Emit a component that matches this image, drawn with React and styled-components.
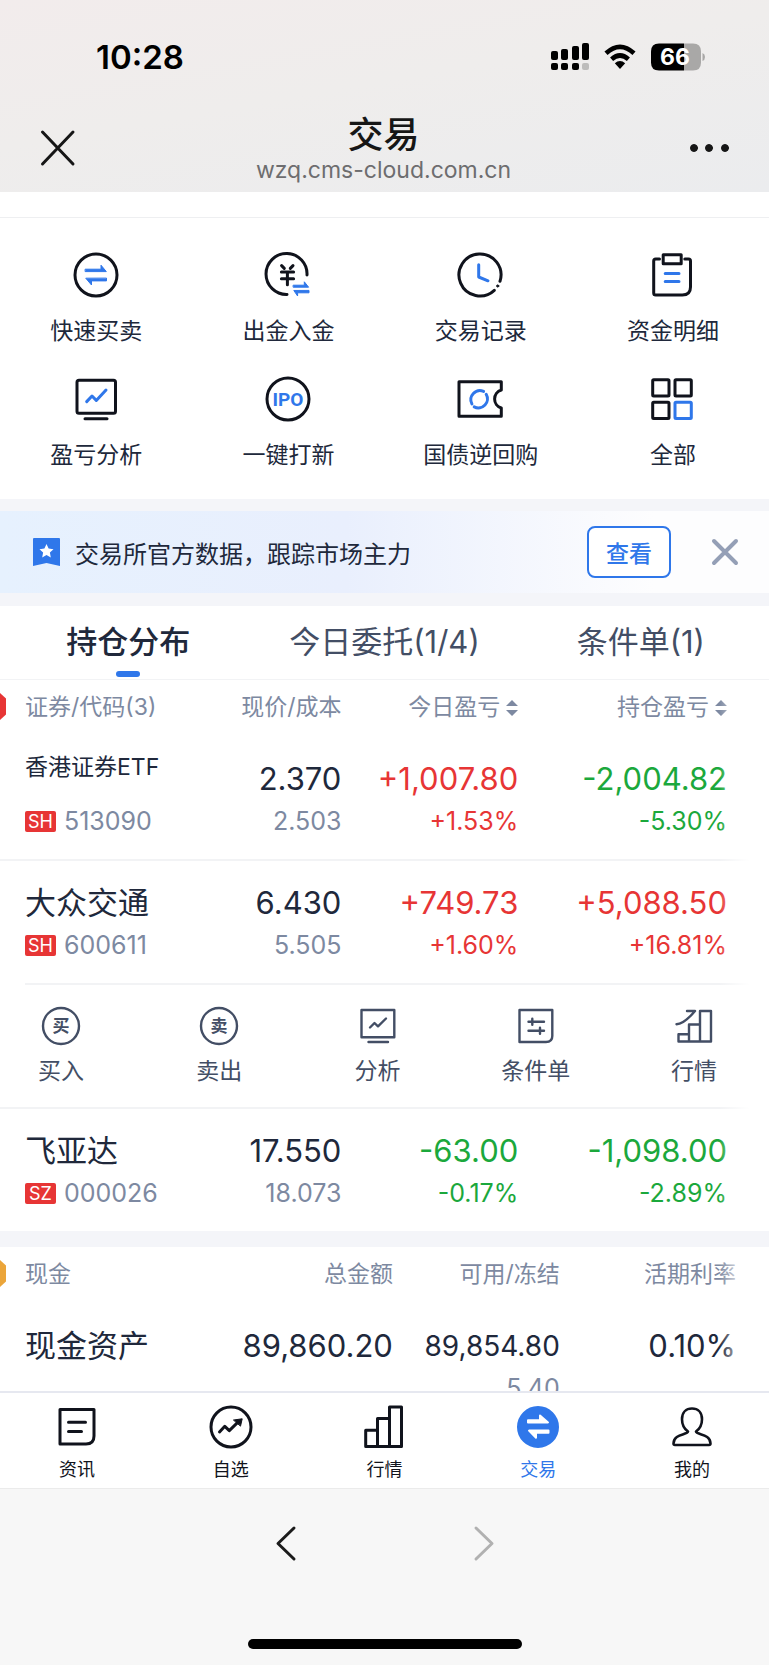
import React from "react";
import styled, { createGlobalStyle, ThemeProvider } from "styled-components";

const theme = {
  primary: "#2f77ea",
  ink: "#10131c",
  text: "#20283b",
  text_secondary: "#434e65",
  text_muted: "#7d89a1",
  up: "#e73535",
  down: "#1ba83c",
  cash: "#eba53a",
  line: "#f2f3f5",
  band: "#f4f5f9",
};

const GlobalStyle = createGlobalStyle`
  * {
    box-sizing: border-box;
  }
  body {
    margin: 0;
    background: #f7f7f7;
    font-family: Inter, "Noto Sans CJK SC", sans-serif;
  }
  button {
    margin: 0;
    padding: 0;
    border: 0;
    background: none;
    color: inherit;
    font: inherit;
  }
  a {
    color: inherit;
    text-decoration: none;
  }
  svg {
    display: block;
    flex: none;
  }
`;

const Page = styled.div`
  height: 100vh;
  display: flex;
  flex-direction: column;
  color: ${({ theme }) => theme.text};
`;

const Header = styled.header`
  background: linear-gradient(170deg, #f2ecec 0%, #efedec 45%, #ebecee 100%);
`;

const StatusBar = styled.div`
  height: 114px;
  padding: 0 64px 0 96px;
  display: flex;
  align-items: center;
  justify-content: space-between;
  color: #000;
`;

const Time = styled.span`
  font-size: 33px;
  font-weight: 600;
`;

const StatusIcons = styled.div`
  display: flex;
  align-items: center;
  gap: 14px;
`;

const NavBar = styled.div`
  height: 78px;
  padding: 0 39px 0 37px;
  display: flex;
  justify-content: space-between;
  color: #161616;
`;

const NavButton = styled.button`
  height: 68px;
`;

const NavTitle = styled.div`
  padding-top: 1px;
  text-align: center;
`;

const Title = styled.h1`
  margin: 0;
  font-size: 36px;
  line-height: 40px;
  font-weight: 500;
`;

const Domain = styled.div`
  font-size: 23px;
  line-height: 30px;
  color: #6d6d6f;
`;

const Content = styled.main`
  flex: 1 1 0;
  min-height: 0;
  overflow: hidden;
  background: #fff;
`;

const Divider = styled.div`
  height: 26px;
  border-bottom: 1px solid #eeeff1;
`;

const Shortcuts = styled.nav`
  padding-top: 33px;
  display: grid;
  grid-template-columns: repeat(4, 1fr);
`;

const Shortcut = styled.a`
  height: 124px;
  display: flex;
  flex-direction: column;
  align-items: center;
  gap: 16px;
  font-size: 23px;
  line-height: 32px;
`;

const Band = styled.div`
  height: ${({ $size }) => $size}px;
  background: ${({ theme }) => theme.band};
`;

const Banner = styled.section`
  height: 82px;
  padding: 0 29px 0 32px;
  display: flex;
  align-items: center;
  background: linear-gradient(90deg, #e6f1fe 0%, #e9effd 45%, #fdfdfe 85%);
`;

const BannerText = styled.p`
  flex: 1;
  margin: 0 0 0 14px;
  font-size: 24px;
`;

const ViewButton = styled.button`
  width: 84px;
  height: 52px;
  margin-right: 39px;
  border: 2px solid ${({ theme }) => theme.primary};
  border-radius: 8px;
  background: #fff;
  color: ${({ theme }) => theme.primary};
  font-size: 23px;
  font-weight: 500;
`;

const Tabs = styled.div`
  height: 74px;
  display: grid;
  grid-template-columns: repeat(3, 1fr);
  border-bottom: 1px solid ${({ theme }) => theme.line};
`;

const Tab = styled.button`
  padding-top: 16px;
  display: flex;
  flex-direction: column;
  align-items: center;
  gap: 9px;
  font-size: 31px;
  line-height: 40px;
  font-weight: ${({ $active }) => ($active ? 500 : 400)};
  color: ${({ $active, theme }) => ($active ? theme.text : theme.text_secondary)};
  &::after {
    content: "";
    width: 24px;
    height: 6px;
    border-radius: 3px;
    background: ${({ $active, theme }) => ($active ? theme.primary : "transparent")};
  }
`;

const Panel = styled.section`
  position: relative;
  &::before {
    content: "";
    position: absolute;
    left: 0;
    top: 13px;
    width: 6px;
    height: 27px;
    background: ${({ $marker }) => $marker};
    clip-path: polygon(0 0, 100% 20%, 100% 80%, 0 100%);
  }
  &::after {
    content: "";
    position: absolute;
    top: 0;
    right: 0;
    bottom: 0;
    width: 50px;
    background: linear-gradient(90deg, rgba(255, 255, 255, 0), #fff 60%);
    pointer-events: none;
  }
`;

const Table = styled.table`
  width: 100%;
  border-collapse: collapse;
  table-layout: fixed;
  th,
  td {
    padding: 0;
    text-align: right;
    vertical-align: top;
  }
  th:first-child,
  td:first-child {
    padding-left: 25px;
    text-align: left;
  }
  th:last-child,
  td:last-child {
    padding-right: ${({ $end }) => $end}px;
  }
`;

const Col = styled.col`
  width: ${({ $share }) => $share};
`;

const HeadCell = styled.th`
  height: 57px;
  font-size: 23px;
  line-height: 55px;
  font-weight: 400;
  color: ${({ theme }) => theme.text_muted};
  white-space: nowrap;
`;

const SortButton = styled.button`
  display: inline-flex;
  align-items: center;
  gap: 6px;
`;

const Row = styled.tr`
  height: 123px;
  border-top: ${({ $line, theme }) => ($line ? `2px solid ${theme.line}` : "0")};
`;

const tones = {
  up: ({ theme }) => theme.up,
  down: ({ theme }) => theme.down,
};

const Value = styled.div`
  padding-top: 20px;
  font-size: ${({ $small }) => ($small ? 28 : 31)}px;
  line-height: 44px;
  color: ${({ $tone, theme }) => (tones[$tone] ? tones[$tone]({ theme }) : theme.text)};
`;

const SubValue = styled.div`
  font-size: 25px;
  line-height: 40px;
  color: ${({ $tone, theme }) => (tones[$tone] ? tones[$tone]({ theme }) : theme.text_muted)};
`;

const Name = styled.div`
  padding-top: ${({ $long }) => ($long ? 8 : 20)}px;
  margin-bottom: ${({ $long }) => ($long ? 12 : 0)}px;
  font-size: ${({ $long }) => ($long ? 23 : 31)}px;
  line-height: 44px;
  white-space: nowrap;
`;

const Code = styled.div`
  display: flex;
  align-items: center;
  gap: 8px;
  font-size: 25px;
  line-height: 40px;
  color: ${({ theme }) => theme.text_muted};
`;

const Market = styled.span`
  width: 31px;
  border-radius: 2px;
  background: ${({ theme }) => theme.up};
  color: #fff;
  font-size: 18px;
  line-height: 21px;
  text-align: center;
`;

const ActionsCell = styled.td`
  height: 125px;
  &&& {
    padding-right: 0;
  }
`;

const Actions = styled.div`
  padding: 21px 39px 0 0;
  display: flex;
  justify-content: space-between;
  border-top: 2px solid ${({ theme }) => theme.line};
`;

const Action = styled.button`
  width: 72px;
  display: flex;
  flex-direction: column;
  align-items: center;
  gap: 9px;
  font-size: 23px;
  line-height: 32px;
  color: ${({ theme }) => theme.text_secondary};
`;

const TabBar = styled.nav`
  height: 97px;
  padding-top: 12px;
  display: grid;
  grid-template-columns: repeat(5, 1fr);
  border-top: 2px solid #e6e8f0;
  background: #fff;
`;

const TabLink = styled.a`
  display: flex;
  flex-direction: column;
  align-items: center;
  gap: 8px;
  font-size: 18px;
  line-height: 26px;
  color: ${({ $active, theme }) => ($active ? theme.primary : theme.ink)};
`;

const BrowserBar = styled.footer`
  height: 177px;
  padding: 34px 0 16px;
  display: flex;
  flex-direction: column;
  align-items: center;
  justify-content: space-between;
  border-top: 1px solid #ebebeb;
`;

const History = styled.div`
  display: flex;
  gap: 158px;
`;

const HomeIndicator = styled.div`
  width: 274px;
  height: 10px;
  border-radius: 5px;
  background: #000;
`;

const Line = styled.svg`
  fill: none;
  stroke: currentColor;
  stroke-width: ${({ $weight }) => $weight};
  stroke-linecap: round;
  stroke-linejoin: round;
  .blue {
    stroke: ${({ theme }) => theme.primary};
  }
  .solid {
    fill: currentColor;
    stroke-width: 1;
  }
  .blueSolid {
    fill: ${({ theme }) => theme.primary};
    stroke: ${({ theme }) => theme.primary};
    stroke-width: 1;
  }
`;

const Glyph = styled.text`
  fill: ${({ $blue, theme }) => ($blue ? theme.primary : "currentColor")};
  stroke: none;
  font-family: ${({ $blue }) => ($blue ? "Roboto, sans-serif" : '"Noto Sans CJK SC", sans-serif')};
  font-size: ${({ $blue }) => ($blue ? 19 : 17)}px;
  font-weight: 700;
  text-anchor: middle;
`;

const BatteryText = styled.text`
  fill: #fff;
  font-size: 23px;
  font-weight: 700;
  text-anchor: middle;
`;

const Icon = ({ size = 48, weight = 3, color, children }) => (
  <Line width={size} height={size} viewBox={`0 0 ${size} ${size}`} $weight={weight} color={color} aria-hidden="true">
    {children}
  </Line>
);

const shortcuts = [
  {
    label: "快速买卖",
    icon: (
      <>
        <circle cx="24" cy="24" r="21" />
        <path className="blueSolid" d="M13.5 18.2H29V14.2L34.3 20.6H13.5Z" />
        <path className="blueSolid" d="M34.5 27.5V29.9H19.5V34L14 27.5Z" />
      </>
    ),
  },
  {
    label: "出金入金",
    icon: (
      <>
        <path d="M43 24A20.5 20.5 0 1 0 23 43.5" />
        <path d="M17.6 14.6L20.3 17.4M29 14.6L26.3 17.4M17.4 20.9H29.6M17.4 27.7H29.6M23.4 20.9V33.8" />
        <path className="blueSolid" d="M29.5 34.2H40.3V30.8L44.6 36.2H29.5Z" />
        <path className="blueSolid" d="M45 39.8V41.8H33.6V45L30 39.8Z" />
      </>
    ),
  },
  {
    label: "交易记录",
    icon: (
      <>
        <path d="M43 30.3A21 21 0 1 0 37.3 39.3" />
        <circle className="solid" cx="40.7" cy="35" r="1.1" />
        <path className="blue" d="M21.7 13.8V26L31 29.8" />
      </>
    ),
  },
  {
    label: "资金明细",
    icon: (
      <>
        <path d="M10.5 8H6.7Q4.7 8 4.7 10V42Q4.7 44 6.7 44H33.3Q41.5 44 41.5 36V10Q41.5 8 39.5 8H35.8" />
        <rect x="14.2" y="3.8" width="18" height="9" />
        <path className="blue" d="M16.2 22.4H30M16.2 30.4H30" />
      </>
    ),
  },
  {
    label: "盈亏分析",
    icon: (
      <>
        <rect x="5" y="5.3" width="38.5" height="33" rx="2" />
        <path d="M13 43.8H35" />
        <path className="blue" d="M14.7 26.6L20 21L24.3 25.4L34 15" />
      </>
    ),
  },
  {
    label: "一键打新",
    icon: (
      <>
        <circle cx="24" cy="24" r="21" />
        <Glyph $blue x="24" y="31">
          IPO
        </Glyph>
      </>
    ),
  },
  {
    label: "国债逆回购",
    icon: (
      <>
        <path d="M44.3 15V6.7H2V41.3H44.3V33A9.4 9.4 0 0 1 44.3 15Z" />
        <path className="blue" d="M26.6 16.4A9.1 9.1 0 0 0 14.9 28.9M17.2 31.9A9.1 9.1 0 0 0 29.2 19.2" />
      </>
    ),
  },
  {
    label: "全部",
    icon: (
      <>
        <rect x="3.7" y="4.7" width="16.3" height="16.3" rx="1" />
        <rect x="26" y="4.7" width="16.3" height="16.3" rx="1" />
        <rect x="3.7" y="27.2" width="16.3" height="16.3" rx="1" />
        <rect className="blue" x="26" y="27.2" width="16.3" height="16.3" rx="1" />
      </>
    ),
  },
];

const holdings = [
  {
    name: "香港证券ETF",
    long: true,
    market: "SH",
    code: "513090",
    price: "2.370",
    cost: "2.503",
    day: ["+1,007.80", "+1.53%", "up"],
    total: ["-2,004.82", "-5.30%", "down"],
  },
  {
    name: "大众交通",
    market: "SH",
    code: "600611",
    price: "6.430",
    cost: "5.505",
    day: ["+749.73", "+1.60%", "up"],
    total: ["+5,088.50", "+16.81%", "up"],
    open: true,
  },
  {
    name: "飞亚达",
    market: "SZ",
    code: "000026",
    price: "17.550",
    cost: "18.073",
    day: ["-63.00", "-0.17%", "down"],
    total: ["-1,098.00", "-2.89%", "down"],
  },
];

const actions = [
  {
    label: "买入",
    icon: (
      <>
        <circle cx="20" cy="20" r="18" />
        <Glyph x="20" y="26">
          买
        </Glyph>
      </>
    ),
  },
  {
    label: "卖出",
    icon: (
      <>
        <circle cx="20" cy="20" r="18" />
        <Glyph x="20" y="26">
          卖
        </Glyph>
      </>
    ),
  },
  {
    label: "分析",
    icon: (
      <>
        <path d="M3.5 4H36.3V31.3H3.5ZM10.5 36H30" />
        <path d="M12 21.5L16.5 17L20 20.3L28 12.5" />
      </>
    ),
  },
  {
    label: "条件单",
    icon: (
      <>
        <path d="M3.5 4H36.3V30Q36.3 36 30 36H3.5Z" />
        <path d="M12.5 15.7H28M16.3 12.7V18.7M12.5 24.7H28M24 21.7V27.7" />
      </>
    ),
  },
  {
    label: "行情",
    icon: (
      <>
        <path d="M4.5 35.5V28.3H15V35.5M15 28.3V18.5H26M26 35.5V5H37V35.5H4.5M26 18.5V35.5M15 28V35.5" />
        <path d="M2.5 18.3Q10 18 21 5H13" />
      </>
    ),
  },
];

const tabLinks = [
  {
    label: "资讯",
    icon: (
      <>
        <path d="M5 4.5H39V31Q39 39 31 39H5Z" />
        <path d="M13.5 17.2H30.5M13.5 26.6H26.5" />
      </>
    ),
  },
  {
    label: "自选",
    icon: (
      <>
        <circle cx="22" cy="22" r="20" />
        <path d="M10.5 27L15.8 21.3L20.3 25.6L29 17.2" />
        <path className="solid" d="M24.8 15L33.2 13.8L31.6 20.8Z" />
      </>
    ),
  },
  {
    label: "行情",
    icon: <path d="M3.7 41.5V25.3H15.5V41.5M15.5 25.3V13.5H27.5M27.5 41.5V2H39.5V41.5H3.7M27.5 13.5V41.5" />,
  },
  {
    label: "交易",
    active: true,
    icon: (
      <>
        <circle cx="22" cy="22" r="19.5" fill="currentColor" />
        <path
          d="M12 15.2H24V10.6L32 17.4H12ZM32.5 25.6V27.8H20V32.8L13 25.6Z"
          fill="#fff"
          stroke="#fff"
          strokeWidth="2"
        />
      </>
    ),
  },
  {
    label: "我的",
    icon: (
      <path
        d="M18 26.5C14.5 24 12 19.5 12 14.2C12 7.6 16 3.5 22 3.5S32 7.6 32 14.2C32 19.5 29.5 24 26 26.5C26.5 30 40.5 28.5 40.5 38.5Q40.5 40 39 40H5Q3.5 40 3.5 38.5C3.5 28.5 17.5 30 18 26.5Z"
        strokeWidth="2.6"
      />
    ),
  },
];

const SortIcon = () => (
  <svg width="12" height="18" viewBox="0 0 12 18" fill="currentColor" aria-hidden="true">
    <path d="M6 1L12 7H0ZM6 17L12 11H0Z" />
  </svg>
);

const SignalIcon = () => (
  <svg width="38" height="28" viewBox="0 0 38 28" aria-hidden="true">
    <rect x="0" y="8" width="7" height="9" rx="2" />
    <rect x="10" y="6" width="7" height="11" rx="2" />
    <rect x="21" y="3" width="7" height="14" rx="2" />
    <rect x="31" y="0" width="7" height="17" rx="2" />
    <rect x="0" y="20" width="7" height="7" rx="2" />
    <rect x="10" y="20" width="7" height="7" rx="2" />
    <rect x="21" y="20" width="7" height="7" rx="2" />
    <rect x="31" y="20" width="7" height="7" rx="2" fill="#bdbcbb" />
  </svg>
);

const WifiIcon = () => (
  <svg width="34" height="26" viewBox="0 0 34 26" aria-hidden="true">
    <path d="M3 9.2Q17 -3.6 31 9.2M8.6 15.2Q17 7.8 25.4 15.2" fill="none" stroke="#000" strokeWidth="4.6" />
    <path d="M17 25L11.8 19.2Q17 14.8 22.2 19.2Z" />
  </svg>
);

const BatteryIcon = () => (
  <svg width="54" height="28" viewBox="0 0 54 28" role="img" aria-label="66%">
    <path d="M8 0.5H33V27.5H8Q0 27.5 0 19.5V8.5Q0 0.5 8 0.5Z" />
    <path d="M33 0.5H42Q50 0.5 50 8.5V19.5Q50 27.5 42 27.5H33Z" fill="#a9a8a7" />
    <path d="M51.5 10Q54 11 54 14T51.5 18Z" fill="#a9a8a7" />
    <BatteryText x="24" y="22">
      66
    </BatteryText>
  </svg>
);

const HoldingRow = ({ item, line }) => (
  <Row $line={line}>
    <td>
      <Name $long={item.long}>{item.name}</Name>
      <Code>
        <Market>{item.market}</Market>
        {item.code}
      </Code>
    </td>
    <td>
      <Value>{item.price}</Value>
      <SubValue>{item.cost}</SubValue>
    </td>
    {[item.day, item.total].map(([amount, rate, tone], index) => (
      <td key={index}>
        <Value $tone={tone}>{amount}</Value>
        <SubValue $tone={tone}>{rate}</SubValue>
      </td>
    ))}
  </Row>
);

const App = () => {
  return (
    <ThemeProvider theme={theme}>
      <GlobalStyle />
      <Page>
        <Header>
          <StatusBar>
            <Time>10:28</Time>
            <StatusIcons>
              <SignalIcon />
              <WifiIcon />
              <BatteryIcon />
            </StatusIcons>
          </StatusBar>
          <NavBar>
            <NavButton aria-label="关闭">
              <Icon size={42}>
                <path d="M5.5 5L36 37M36 5L5.5 37" />
              </Icon>
            </NavButton>
            <NavTitle>
              <Title>交易</Title>
              <Domain>wzq.cms-cloud.com.cn</Domain>
            </NavTitle>
            <NavButton aria-label="更多">
              <Icon size={42} weight={1}>
                <circle className="solid" cx="6" cy="21" r="3.5" />
                <circle className="solid" cx="21" cy="21" r="3.5" />
                <circle className="solid" cx="37" cy="21" r="3.5" />
              </Icon>
            </NavButton>
          </NavBar>
        </Header>

        <Content>
          <Divider />
          <Shortcuts>
            {shortcuts.map(({ label, icon }) => (
              <Shortcut href="#" key={label}>
                <Icon color={theme.ink}>{icon}</Icon>
                {label}
              </Shortcut>
            ))}
          </Shortcuts>
          <Band $size={12} />
          <Banner>
            <svg width="29" height="30" viewBox="0 0 29 30" aria-hidden="true">
              <path d="M1 2Q1 1 2 1H27Q28 1 28 2V29L14.5 26L1 29Z" fill={theme.primary} />
              <path
                d="M14.5 7L16.6 11.6L21.5 12.2L17.9 15.6L18.8 20.5L14.5 18.1L10.2 20.5L11.1 15.6L7.5 12.2L12.4 11.6Z"
                fill="#fff"
              />
            </svg>
            <BannerText>交易所官方数据，跟踪市场主力</BannerText>
            <ViewButton>查看</ViewButton>
            <button aria-label="关闭提示">
              <Icon size={30} weight={4} color="#949fb6">
                <path d="M4 4L26 26M26 4L4 26" />
              </Icon>
            </button>
          </Banner>
          <Band $size={13} />
          <Tabs>
            <Tab $active>持仓分布</Tab>
            <Tab>今日委托(1/4)</Tab>
            <Tab>条件单(1)</Tab>
          </Tabs>

          <Panel $marker={theme.up}>
            <Table $end={42}>
              <colgroup>
                <Col $share="26%" />
                <Col $share="18.4%" />
                <Col $share="23%" />
                <Col $share="32.6%" />
              </colgroup>
              <thead>
                <tr>
                  <HeadCell>证券/代码(3)</HeadCell>
                  <HeadCell>现价/成本</HeadCell>
                  <HeadCell>
                    <SortButton>
                      今日盈亏
                      <SortIcon />
                    </SortButton>
                  </HeadCell>
                  <HeadCell>
                    <SortButton>
                      持仓盈亏
                      <SortIcon />
                    </SortButton>
                  </HeadCell>
                </tr>
              </thead>
              <tbody>
                {holdings.map((item, index) => (
                  <React.Fragment key={item.code}>
                    <HoldingRow item={item} line={index > 0} />
                    {item.open && (
                      <tr>
                        <ActionsCell colSpan={4}>
                          <Actions>
                            {actions.map(({ label, icon }) => (
                              <Action key={label}>
                                <Icon size={40} weight={2.4}>
                                  {icon}
                                </Icon>
                                {label}
                              </Action>
                            ))}
                          </Actions>
                        </ActionsCell>
                      </tr>
                    )}
                  </React.Fragment>
                ))}
              </tbody>
            </Table>
          </Panel>

          <Band $size={16} />
          <Panel $marker={theme.cash}>
            <Table $end={33}>
              <colgroup>
                <Col $share="28%" />
                <Col $share="23.1%" />
                <Col $share="21.7%" />
                <Col $share="27.2%" />
              </colgroup>
              <thead>
                <tr>
                  <HeadCell>现金</HeadCell>
                  <HeadCell>总金额</HeadCell>
                  <HeadCell>可用/冻结</HeadCell>
                  <HeadCell>活期利率</HeadCell>
                </tr>
              </thead>
              <tbody>
                <Row>
                  <td>
                    <Name>现金资产</Name>
                  </td>
                  <td>
                    <Value>89,860.20</Value>
                  </td>
                  <td>
                    <Value $small>89,854.80</Value>
                    <SubValue>5.40</SubValue>
                  </td>
                  <td>
                    <Value>0.10%</Value>
                  </td>
                </Row>
              </tbody>
            </Table>
          </Panel>
        </Content>

        <TabBar>
          {tabLinks.map(({ label, icon, active }) => (
            <TabLink href="#" key={label} $active={active}>
              <Icon size={44}>{icon}</Icon>
              {label}
            </TabLink>
          ))}
        </TabBar>
        <BrowserBar>
          <History>
            <button aria-label="后退">
              <Icon size={40} color="#1b1b1b">
                <path d="M28 5L12 20.5L28 36" />
              </Icon>
            </button>
            <button aria-label="前进" disabled>
              <Icon size={40} color="#b1b1b1">
                <path d="M12 5L28 20.5L12 36" />
              </Icon>
            </button>
          </History>
          <HomeIndicator />
        </BrowserBar>
      </Page>
    </ThemeProvider>
  );
};

export default App;
